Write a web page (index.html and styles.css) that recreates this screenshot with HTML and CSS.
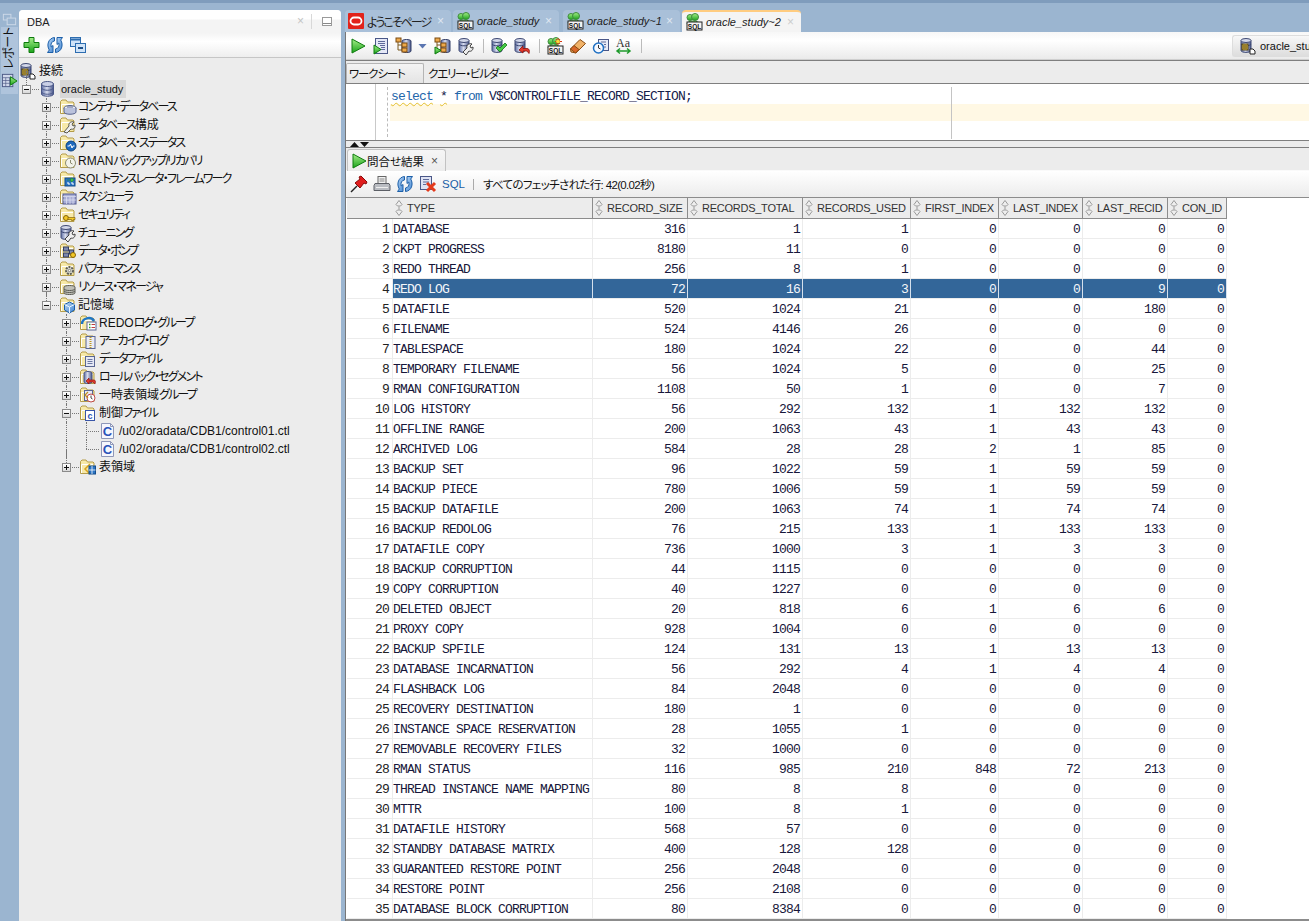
FILE: index.html
```html
<!DOCTYPE html>
<html lang="ja">
<head>
<meta charset="utf-8">
<title>Oracle SQL Developer</title>
<link rel="stylesheet" href="styles.css">
</head>
<body>
<svg class="sprite" aria-hidden="true">
<defs>
<linearGradient id="gDb" x1="0" x2="1" y1="0" y2="0"><stop offset="0" stop-color="#5f6fa5"/><stop offset=".45" stop-color="#d7dcee"/><stop offset="1" stop-color="#46548a"/></linearGradient>
<linearGradient id="gBlue" x1="0" x2="1" y1="0" y2="1"><stop offset="0" stop-color="#bcd9f7"/><stop offset="1" stop-color="#3f84d0"/></linearGradient>
<linearGradient id="gGreen" x1="0" x2="0" y1="0" y2="1"><stop offset="0" stop-color="#a6ee8a"/><stop offset="1" stop-color="#1aa31a"/></linearGradient>
</defs>
<symbol id="fold" viewBox="0 0 18 18"><path d="M1.5 15.5V3.5L3 2h4l1.5 2H14l1 1v10.5z" fill="#f7e9a8" stroke="#b49c4a"/><path d="M2.5 15V6.5h11.5" fill="none" stroke="#fff"/></symbol>
<symbol id="db" viewBox="0 0 18 18"><path d="M2.5 4v10c0 3 12 3 12 0V4z" fill="url(#gDb)" stroke="#4a5787"/><ellipse cx="8.5" cy="4" rx="6" ry="2.5" fill="#c9cfe6" stroke="#4a5787"/><path d="M2.5 8c1 3 11 3 12 0M2.5 12c1 3 11 3 12 0" fill="none" stroke="#4a5787"/></symbol>
<symbol id="dbs" viewBox="0 0 18 18"><path d="M2 3.5v10c0 2.5 10 2.5 10 0v-10z" fill="url(#gDb)" stroke="#3d4872"/><ellipse cx="7" cy="3.5" rx="5" ry="2" fill="#d3d8ea" stroke="#3d4872"/><path d="M2 7c1 2.4 9 2.4 10 0" fill="none" stroke="#3d4872"/></symbol>
<symbol id="conn" viewBox="0 0 18 18"><use href="#dbs"/><rect x="3" y="7" width="6" height="6" fill="#e5c14a" stroke="#4d3e10"/><path d="M4 9h4M4 11h4" stroke="#4d3e10"/><path d="M11 12v5h5v-3l-2-2z" fill="#fff" stroke="#222"/></symbol>
<symbol id="o-cont" viewBox="0 0 18 18"><ellipse cx="11" cy="10" rx="6" ry="2.5" fill="#e9ecf5" stroke="#59658f"/><path d="M5 10v4c0 3 12 3 12 0v-4" fill="#bac2dc" stroke="#59658f"/><path d="M8 9h6" stroke="#59658f"/></symbol>
<symbol id="o-wrench" viewBox="0 0 18 18"><path d="M5 16l5-6c-1-3 2-5 5-4l-2 2 1 2 2-1c.5 3-2 5-4 4l-4 4z" fill="#eee" stroke="#59594f"/></symbol>
<symbol id="o-stat" viewBox="0 0 18 18"><circle cx="12" cy="12" r="5" fill="#1d68bd" stroke="#0e427e"/><path d="M8.500 12h2l1-2 1.500 4 1-2h1.500" fill="none" stroke="#fff"/></symbol>
<symbol id="o-disc" viewBox="0 0 18 18"><circle cx="11.500" cy="11" r="5" fill="#f3f3ea" stroke="#8b8b70"/><path d="M11.500 8v3l2 1" fill="none" stroke="#8b8b70"/></symbol>
<symbol id="o-sqlt" viewBox="0 0 18 18"><rect x="6" y="8" width="10" height="8" fill="#2b74c4" stroke="#134c8b"/><path d="M8 10h4M12 8l3 2-3 2z" fill="#4fd34f" stroke="#1d8d1d" stroke-width=".6"/><path d="M8 13h2v2M12 13h2v2" fill="none" stroke="#fff"/></symbol>
<symbol id="o-cal" viewBox="0 0 18 18"><rect x="4" y="6" width="13" height="10" fill="#a9aed6" stroke="#505990"/><path d="M4 8.500h13M7.500 9v7M11 9v7M14 9v7M4 12h13" stroke="#e1e4f4" stroke-width=".7"/></symbol>
<symbol id="o-key" viewBox="0 0 18 18"><circle cx="7" cy="12" r="2.500" fill="#f3c826" stroke="#85640a"/><path d="M9 11.500h7v2h-1.500v1h-2v-1H9z" fill="#f3c826" stroke="#85640a" stroke-width=".7"/></symbol>
<symbol id="o-pump" viewBox="0 0 18 18"><rect x="4.500" y="5" width="5" height="4" fill="#7c88ad" stroke="#353f63"/><rect x="4.500" y="11" width="5" height="4" fill="#7c88ad" stroke="#353f63"/><rect x="10.500" y="8" width="4" height="4" fill="#7c88ad" stroke="#353f63"/><circle cx="14" cy="13" r="2.500" fill="#f3c826" stroke="#85640a"/></symbol>
<symbol id="o-gear" viewBox="0 0 18 18"><circle cx="10.500" cy="10.500" r="3.500" fill="#d9d9d0" stroke="#5d5d55" stroke-width="2" stroke-dasharray="2 1"/><circle cx="10.500" cy="10.500" r="1.200" fill="#fff" stroke="#5d5d55" stroke-width=".7"/></symbol>
<symbol id="o-stack" viewBox="0 0 18 18"><path d="M5 9c0-2 11-2 11 0v6c0 2-11 2-11 0z" fill="#c0c0b8" stroke="#5b5b55"/><path d="M5 11c1 2 10 2 11 0M5 13c1 2 10 2 11 0" fill="none" stroke="#5b5b55"/></symbol>
<symbol id="o-cube" viewBox="0 0 18 18"><path d="M10.500 6l5 2.500v5.500l-5 3-5-3V8.500z" fill="url(#gBlue)" stroke="#1c5fa8"/><path d="M5.500 8.500l5 2.500 5-2.500M10.500 11v6" fill="none" stroke="#e8f4ff"/></symbol>
<symbol id="o-redo" viewBox="0 0 18 18"><path d="M3 10c0-6 9-8 12-3" fill="none" stroke="#1e76c6" stroke-width="2.500"/><rect x="8" y="8" width="9" height="8" fill="#fff" stroke="#5a6794"/><path d="M10 10.500h1.500M10 13.500h1.500" stroke="#2da12d" stroke-width="1.500"/><path d="M12.500 10.500H16M12.500 13.500H16" stroke="#c04040"/></symbol>
<symbol id="o-zip" viewBox="0 0 18 18"><rect x="7" y="4.500" width="9" height="12" fill="#e9ebf6" stroke="#5a6794"/><path d="M11.500 5v11" stroke="#bf9a1d" stroke-width="2" stroke-dasharray="1 1"/></symbol>
<symbol id="o-doc" viewBox="0 0 18 18"><rect x="6.500" y="6.500" width="9" height="10" fill="#e6e9f6" stroke="#5a6794"/><path d="M8.500 9.500h5M8.500 11.500h5M8.500 13.500h5" stroke="#6c78a4"/></symbol>
<symbol id="o-rb" viewBox="0 0 18 18"><path d="M5 5c0-2 8-2 8 0v9c0 2-8 2-8 0z" fill="url(#gDb)" stroke="#4a5787"/><path d="M7 13l3-3v2h5c1 0 2 1 1 4l-2-2h-4v2z" fill="#e23a2e" stroke="#8f120b" stroke-width=".7"/></symbol>
<symbol id="o-temp" viewBox="0 0 18 18"><rect x="5.500" y="4.500" width="8" height="10" fill="#e9ebf6" stroke="#5a6794"/><circle cx="12" cy="12" r="4" fill="#fff" stroke="#c04a4a"/><path d="M12 9.500V12l1.500 1" fill="none" stroke="#444"/><path d="M9 6l-3 3 3 3" fill="none" stroke="#c28e1a" stroke-width="1.200"/></symbol>
<symbol id="o-c" viewBox="0 0 18 18"><rect x="6.500" y="6.500" width="9" height="10" fill="#fff" stroke="#3a56a8"/></symbol>
<symbol id="o-ts" viewBox="0 0 18 18"><path d="M11 6l-5 5 5 5" fill="none" stroke="#d9a41e" stroke-width="1.500"/><rect x="10" y="8" width="6.500" height="8" fill="#2b74c4" stroke="#134c8b"/><path d="M13 8v8M10 12h6.500" stroke="#fff" stroke-width=".8"/></symbol>
<symbol id="file" viewBox="0 0 18 18"><path d="M2.500 1.500h9l3 3v12h-12z" fill="#f5f6fd" stroke="#8f97b8"/><path d="M11.500 1.500v3h3" fill="none" stroke="#8f97b8"/></symbol>
<symbol id="play" viewBox="0 0 18 18"><path d="M3 2l13 7-13 7z" fill="url(#gGreen)" stroke="#0f7d0f"/></symbol>
<symbol id="run" viewBox="0 0 18 18"><rect x="3.500" y="1.500" width="12" height="15" fill="#e5e8f7" stroke="#4a5787"/><path d="M6 4.500h7M6 6.500h7M8 8.500h5M9 10.500h4M9 12.500h4" stroke="#5f6b9a"/><path d="M2 8l7 4.500L2 17z" fill="url(#gGreen)" stroke="#0f7d0f"/></symbol>
<symbol id="plan" viewBox="0 0 18 18"><path d="M7 4c0-2 9-2 9 0v10c0 2-9 2-9 0z" fill="url(#gDb)" stroke="#333e66"/><path d="M3 4v9h5M3 8h5" fill="none" stroke="#7a5a20"/><rect x="1" y="1" width="5" height="4" fill="#eda94b" stroke="#7a4a10"/><rect x="7" y="6" width="5" height="4" fill="#eda94b" stroke="#7a4a10"/><rect x="7" y="11" width="5" height="4" fill="#eda94b" stroke="#7a4a10"/></symbol>
<symbol id="trace" viewBox="0 0 18 18"><use href="#plan"/><path d="M1 10l6 3.500L1 17z" fill="url(#gGreen)" stroke="#0f7d0f"/></symbol>
<symbol id="dbw" viewBox="0 0 18 18"><use href="#dbs"/><path d="M6 15l4-4c-1-3 2-5 5-4l-2 2 1 2 2-1c.5 3-2 5-4 4l-3 4z" fill="#eee" stroke="#444"/></symbol>
<symbol id="commit" viewBox="0 0 18 18"><use href="#dbs"/><path d="M6 11l2-2 2 2 5-5 2 2-7 7z" fill="#46c846" stroke="#127a12" stroke-width=".8"/></symbol>
<symbol id="rollback" viewBox="0 0 18 18"><use href="#dbs"/><path d="M6 13l4-4v2.500h4c2 0 3 2 2 5l-2-2.500h-4V16z" fill="#e23a2e" stroke="#8f120b" stroke-width=".8"/></symbol>
<symbol id="sql" viewBox="0 0 18 18"><circle cx="5" cy="4.500" r="3" fill="url(#gGreen)" stroke="#3f8a3f"/><circle cx="10" cy="4" r="3.500" fill="url(#gGreen)" stroke="#3f8a3f"/><path d="M2 11c0-4 12-4 13 0z" fill="url(#gGreen)" stroke="#3f8a3f"/><rect x="2" y="9" width="15" height="8" fill="#f4f4f4" stroke="#222"/><text x="9.500" y="15.500" class="badge">SQL</text></symbol>
<symbol id="sqlnew" viewBox="0 0 18 18"><use href="#sql"/><path d="M12 1v7M9 4.500h7M10 2l4 5M14 2l-4 5" stroke="#d93b13" stroke-width="1"/><circle cx="12" cy="4.500" r="1.800" fill="#ffd83a"/></symbol>
<symbol id="eraser" viewBox="0 0 18 18"><path d="M1.500 12L11 2.500l5.500 4-9.500 9.500-5-1z" fill="#f0b268" stroke="#8a4c13"/><path d="M1.500 12l5 4 3.500-3.500-5-4z" fill="#d9682a" stroke="#8a4c13"/></symbol>
<symbol id="hist" viewBox="0 0 18 18"><rect x="6.500" y="2.500" width="10" height="11" fill="#e8ebf7" stroke="#4a5787"/><path d="M9 5h5M12 7.500h2M12 10h2" stroke="#5f6b9a"/><circle cx="6.500" cy="11" r="5" fill="#f5f8ff" stroke="#1e6fc2" stroke-width="1.500"/><path d="M6.500 8v3l2 1" fill="none" stroke="#333"/></symbol>
<symbol id="case" viewBox="0 0 18 18"><text x="1" y="10" class="aa">Aa</text><path d="M2 14h13M5 11.500L2 14l3 2.500M12 11.500l3 2.500-3 2.500" fill="none" stroke="#1f9a2c" stroke-width="1.500"/></symbol>
<symbol id="add" viewBox="0 0 18 18"><path d="M6 1.500h5v5h5v5h-5v5H6v-5H1v-5h5z" fill="url(#gGreen)" stroke="#0c7a0c"/></symbol>
<symbol id="refresh" viewBox="0 0 18 18"><path d="M8.500 1.500v3.500C5.500 5.300 4.500 8 5.200 11L7 9.500v7H1.500l1.800-2.500C.2 9 2.500 2 8.500 1.500z" fill="url(#gBlue)" stroke="#1c5fa8"/><path d="M9.500 16.500V13c3-.3 4-3 3.300-6L11 8.500v-7h5.500L14.700 4c3.100 5 .8 12-5.200 12.500z" fill="url(#gBlue)" stroke="#1c5fa8"/></symbol>
<symbol id="collapse" viewBox="0 0 18 18"><rect x="1.500" y="1.500" width="10" height="9" fill="#cfe3f8" stroke="#2d6db0"/><path d="M1.500 3.500h10" stroke="#2d6db0" stroke-width="2"/><rect x="6.500" y="7.500" width="10" height="9" fill="#cfe3f8" stroke="#2d6db0"/><path d="M9 12h5" stroke="#1d4f87" stroke-width="2"/></symbol>
<symbol id="pin" viewBox="0 0 18 18"><path d="M1 17l6-6" stroke="#222" stroke-width="1.500"/><path d="M5 8l5-4-1-2 2-1 6 6-1 2-2-1-4 5z" fill="#e01d1d" stroke="#8a0808"/></symbol>
<symbol id="print" viewBox="0 0 18 18"><rect x="5" y="1.500" width="8" height="7" fill="#f1f1f1" stroke="#666"/><path d="M6.500 4h5M6.500 6h5" stroke="#888"/><path d="M2 8.500h14l1 2v5H1v-5z" fill="#b9bcc2" stroke="#5c5f66"/><path d="M3 12.500h12" stroke="#eee"/></symbol>
<symbol id="clear" viewBox="0 0 18 18"><rect x="1.500" y="1.500" width="11" height="13" fill="#dfe3f3" stroke="#4a5787"/><path d="M4 4.500h6M4 7h6M4 9.500h3" stroke="#5f6b9a"/><path d="M8 8l8 8M16 8l-8 8" stroke="#e43a1c" stroke-width="3"/></symbol>
<symbol id="oracle" viewBox="0 0 18 18"><rect width="16" height="16" y="1" rx="1" fill="#e2231a"/><rect x="2.500" y="5.500" width="11" height="7" rx="3.500" fill="none" stroke="#fff" stroke-width="1.800"/></symbol>
<symbol id="report" viewBox="0 0 18 18"><rect x="1.500" y="2.500" width="11" height="13" fill="#cfd7ea" stroke="#4d5a86"/><path d="M1.500 6h11M1.500 9h11M1.500 12h11M5 6v9.500M9 6v9.500" stroke="#4d5a86" stroke-width=".7"/><path d="M10 5l7 4.500-7 4.500z" fill="url(#gGreen)" stroke="#0f7d0f"/></symbol>
<symbol id="windows" viewBox="0 0 18 18"><rect x="2.500" y="3.500" width="8" height="6" fill="none" stroke="#cdd9e8"/><rect x="6.500" y="7.500" width="9" height="7" fill="#9bb5d0" stroke="#cdd9e8"/></symbol>
<symbol id="sort" viewBox="0 0 10 18"><path d="M5 1.500l3 4-1.500 1.500H3.500L2 5.500zM5 16.500l3-4-1.500-1.500H3.500L2 12.500z" fill="#eee" stroke="#9a9a9a"/><path d="M5 7.500v3" stroke="#9a9a9a"/></symbol>
</svg>

<div class="app">
  <div class="strip"></div>
  <div class="main">
    <aside class="rail">
      <svg class="rail-ic" viewBox="0 0 18 18"><use href="#windows"/></svg>
      <div class="rail-block">
        <span class="rail-label">レポート</span>
        <svg class="rail-ic" viewBox="0 0 18 18"><use href="#report"/></svg>
      </div>
    </aside>

    <section class="left">
      <div class="left-title">
        <span class="left-name">DBA</span>
        <span class="left-close">×</span>
        <span class="left-min"></span>
      </div>
      <div class="left-tools">
        <svg class="ib" viewBox="0 0 18 18"><use href="#add"/></svg>
        <svg class="ib" viewBox="0 0 18 18"><use href="#refresh"/></svg>
        <svg class="ib" viewBox="0 0 18 18"><use href="#collapse"/></svg>
      </div>
      <div class="tree">
        <div class="tr"><svg class="ti" viewBox="0 0 18 18"><use href="#conn"/></svg><span class="tt t-root">接続</span></div>
        <div class="tr"><span class="c end"><i class="minus"></i></span><svg class="ti" viewBox="0 0 18 18"><use href="#db"/></svg><span class="tt sel">oracle_study</span></div>
        <div class="tr"><span class="c"></span><span class="c v"><i class="plus"></i></span><svg class="ti" viewBox="0 0 18 18"><use href="#fold"/><use href="#o-cont"/></svg><span class="tt">コンテナ・データベース</span></div>
        <div class="tr"><span class="c"></span><span class="c v"><i class="plus"></i></span><svg class="ti" viewBox="0 0 18 18"><use href="#fold"/><use href="#o-wrench"/></svg><span class="tt">データベース<span class="n">構成</span></span></div>
        <div class="tr"><span class="c"></span><span class="c v"><i class="plus"></i></span><svg class="ti" viewBox="0 0 18 18"><use href="#fold"/><use href="#o-stat"/></svg><span class="tt">データベース・ステータス</span></div>
        <div class="tr"><span class="c"></span><span class="c v"><i class="plus"></i></span><svg class="ti" viewBox="0 0 18 18"><use href="#fold"/><use href="#o-disc"/></svg><span class="tt"><span class="n">RMAN</span>バックアップ/リカバリ</span></div>
        <div class="tr"><span class="c"></span><span class="c v"><i class="plus"></i></span><svg class="ti" viewBox="0 0 18 18"><use href="#fold"/><use href="#o-sqlt"/></svg><span class="tt"><span class="n">SQL</span>トランスレータ・フレームワーク</span></div>
        <div class="tr"><span class="c"></span><span class="c v"><i class="plus"></i></span><svg class="ti" viewBox="0 0 18 18"><use href="#fold"/><use href="#o-cal"/></svg><span class="tt">スケジューラ</span></div>
        <div class="tr"><span class="c"></span><span class="c v"><i class="plus"></i></span><svg class="ti" viewBox="0 0 18 18"><use href="#fold"/><use href="#o-key"/></svg><span class="tt">セキュリティ</span></div>
        <div class="tr"><span class="c"></span><span class="c v"><i class="plus"></i></span><svg class="ti" viewBox="0 0 18 18"><use href="#dbw"/></svg><span class="tt">チューニング</span></div>
        <div class="tr"><span class="c"></span><span class="c v"><i class="plus"></i></span><svg class="ti" viewBox="0 0 18 18"><use href="#fold"/><use href="#o-pump"/></svg><span class="tt">データ・ポンプ</span></div>
        <div class="tr"><span class="c"></span><span class="c v"><i class="plus"></i></span><svg class="ti" viewBox="0 0 18 18"><use href="#fold"/><use href="#o-gear"/></svg><span class="tt">パフォーマンス</span></div>
        <div class="tr"><span class="c"></span><span class="c v"><i class="plus"></i></span><svg class="ti" viewBox="0 0 18 18"><use href="#fold"/><use href="#o-stack"/></svg><span class="tt">リソース・マネージャ</span></div>
        <div class="tr"><span class="c"></span><span class="c end"><i class="minus"></i></span><svg class="ti" viewBox="0 0 18 18"><use href="#fold"/><use href="#o-cube"/></svg><span class="tt"><span class="n">記憶域</span></span></div>
        <div class="tr"><span class="c"></span><span class="c"></span><span class="c v"><i class="plus"></i></span><svg class="ti" viewBox="0 0 18 18"><use href="#fold"/><use href="#o-redo"/></svg><span class="tt lv2"><span class="n">REDO</span>ログ・グループ</span></div>
        <div class="tr"><span class="c"></span><span class="c"></span><span class="c v"><i class="plus"></i></span><svg class="ti" viewBox="0 0 18 18"><use href="#fold"/><use href="#o-zip"/></svg><span class="tt lv2">アーカイブ・ログ</span></div>
        <div class="tr"><span class="c"></span><span class="c"></span><span class="c v"><i class="plus"></i></span><svg class="ti" viewBox="0 0 18 18"><use href="#fold"/><use href="#o-doc"/></svg><span class="tt lv2">データファイル</span></div>
        <div class="tr"><span class="c"></span><span class="c"></span><span class="c v"><i class="plus"></i></span><svg class="ti" viewBox="0 0 18 18"><use href="#fold"/><use href="#o-rb"/></svg><span class="tt lv2">ロールバック・セグメント</span></div>
        <div class="tr"><span class="c"></span><span class="c"></span><span class="c v"><i class="plus"></i></span><svg class="ti" viewBox="0 0 18 18"><use href="#fold"/><use href="#o-temp"/></svg><span class="tt lv2"><span class="n">一時表領域</span>グループ</span></div>
        <div class="tr"><span class="c"></span><span class="c"></span><span class="c v"><i class="minus"></i></span><svg class="ti" viewBox="0 0 18 18"><use href="#fold"/><use href="#o-c"/><text x="11" y="15" class="cmark">c</text></svg><span class="tt lv2"><span class="n">制御</span>ファイル</span></div>
        <div class="tr"><span class="c"></span><span class="c"></span><span class="c b"></span><span class="c t"></span><svg class="ti file" viewBox="0 0 18 18"><use href="#file"/><text x="8.500" y="14" class="cbig">C</text></svg><span class="tt file-t">/u02/oradata/CDB1/control01.ctl</span></div>
        <div class="tr"><span class="c"></span><span class="c"></span><span class="c b"></span><span class="c l"></span><svg class="ti file" viewBox="0 0 18 18"><use href="#file"/><text x="8.500" y="14" class="cbig">C</text></svg><span class="tt file-t">/u02/oradata/CDB1/control02.ctl</span></div>
        <div class="tr"><span class="c"></span><span class="c"></span><span class="c end"><i class="plus"></i></span><svg class="ti" viewBox="0 0 18 18"><use href="#fold"/><use href="#o-ts"/></svg><span class="tt lv2"><span class="n">表領域</span></span></div>
      </div>
    </section>

    <section class="right">
      <nav class="tabs">
        <div class="tab tab-a"><svg class="ib" viewBox="0 0 18 18"><use href="#oracle"/></svg><span class="tab-l plain">ようこそページ</span><span class="tab-x">×</span></div>
        <div class="tab tab-b"><svg class="ib" viewBox="0 0 18 18"><use href="#sql"/></svg><span class="tab-l">oracle_study</span><span class="tab-x">×</span></div>
        <div class="tab tab-c"><svg class="ib" viewBox="0 0 18 18"><use href="#sql"/></svg><span class="tab-l">oracle_study~1</span><span class="tab-x">×</span></div>
        <div class="tab tab-d on"><svg class="ib" viewBox="0 0 18 18"><use href="#sql"/></svg><span class="tab-l">oracle_study~2</span><span class="tab-x">×</span></div>
      </nav>
      <div class="content">
        <div class="toolbar">
          <svg class="ib" viewBox="0 0 18 18"><use href="#play"/></svg>
          <svg class="ib" viewBox="0 0 18 18"><use href="#run"/></svg>
          <svg class="ib" viewBox="0 0 18 18"><use href="#plan"/></svg>
          <span class="drop"></span>
          <svg class="ib m2" viewBox="0 0 18 18"><use href="#trace"/></svg>
          <svg class="ib" viewBox="0 0 18 18"><use href="#dbw"/></svg>
          <span class="sep"></span>
          <svg class="ib" viewBox="0 0 18 18"><use href="#commit"/></svg>
          <svg class="ib" viewBox="0 0 18 18"><use href="#rollback"/></svg>
          <span class="sep"></span>
          <svg class="ib" viewBox="0 0 18 18"><use href="#sqlnew"/></svg>
          <svg class="ib" viewBox="0 0 18 18"><use href="#eraser"/></svg>
          <svg class="ib" viewBox="0 0 18 18"><use href="#hist"/></svg>
          <svg class="ib" viewBox="0 0 18 18"><use href="#case"/></svg>
          <span class="sep"></span>
          <div class="conn-btn"><svg class="ib" viewBox="0 0 18 18"><use href="#conn"/></svg><span>oracle_study</span></div>
        </div>
        <div class="ws-tabs">
          <span class="ws-tab on">ワークシート</span>
          <span class="ws-tab">クエリー・ビルダー</span>
        </div>
        <div class="editor">
          <div class="gut1"></div>
          <div class="gut2"></div>
          <div class="code">
            <div class="line"><span class="kw wavy">select</span> <span class="wavy">*</span> <span class="kw">from</span> V$CONTROLFILE_RECORD_SECTION;</div>
            <div class="line cur"></div>
          </div>
          <div class="margin"></div>
        </div>
        <div class="split"><span class="up"></span><span class="down"></span></div>
        <div class="res-tabs">
          <div class="res-tab"><svg class="ib" viewBox="0 0 18 18"><use href="#play"/></svg><span class="res-name">問合せ結果</span><span class="res-x">×</span></div>
        </div>
        <div class="res-tools">
          <svg class="ib" viewBox="0 0 18 18"><use href="#pin"/></svg>
          <svg class="ib" viewBox="0 0 18 18"><use href="#print"/></svg>
          <svg class="ib" viewBox="0 0 18 18"><use href="#refresh"/></svg>
          <svg class="ib" viewBox="0 0 18 18"><use href="#clear"/></svg>
          <span class="sql-link">SQL</span>
          <span class="res-sep"></span>
          <span class="res-msg">すべてのフェッチされた行: 42(0.02秒)</span>
        </div>
        <div class="grid-wrap">
          <table class="grid">
            <colgroup><col class="w0"><col class="w1"><col class="w2"><col class="w3"><col class="w4"><col class="w5"><col class="w6"><col class="w7"><col class="w8"></colgroup>
            <thead><tr><th></th>
              <th><svg class="sort" viewBox="0 0 10 18"><use href="#sort"/></svg>TYPE</th>
              <th><svg class="sort" viewBox="0 0 10 18"><use href="#sort"/></svg>RECORD_SIZE</th>
              <th><svg class="sort" viewBox="0 0 10 18"><use href="#sort"/></svg>RECORDS_TOTAL</th>
              <th><svg class="sort" viewBox="0 0 10 18"><use href="#sort"/></svg>RECORDS_USED</th>
              <th><svg class="sort" viewBox="0 0 10 18"><use href="#sort"/></svg>FIRST_INDEX</th>
              <th><svg class="sort" viewBox="0 0 10 18"><use href="#sort"/></svg>LAST_INDEX</th>
              <th><svg class="sort" viewBox="0 0 10 18"><use href="#sort"/></svg>LAST_RECID</th>
              <th><svg class="sort" viewBox="0 0 10 18"><use href="#sort"/></svg>CON_ID</th>
            </tr></thead>
            <tbody>
<tr><td>1</td><td>DATABASE</td><td>316</td><td>1</td><td>1</td><td>0</td><td>0</td><td>0</td><td>0</td></tr>
<tr><td>2</td><td>CKPT PROGRESS</td><td>8180</td><td>11</td><td>0</td><td>0</td><td>0</td><td>0</td><td>0</td></tr>
<tr><td>3</td><td>REDO THREAD</td><td>256</td><td>8</td><td>1</td><td>0</td><td>0</td><td>0</td><td>0</td></tr>
<tr class="picked"><td>4</td><td>REDO LOG</td><td>72</td><td>16</td><td>3</td><td>0</td><td>0</td><td>9</td><td>0</td></tr>
<tr><td>5</td><td>DATAFILE</td><td>520</td><td>1024</td><td>21</td><td>0</td><td>0</td><td>180</td><td>0</td></tr>
<tr><td>6</td><td>FILENAME</td><td>524</td><td>4146</td><td>26</td><td>0</td><td>0</td><td>0</td><td>0</td></tr>
<tr><td>7</td><td>TABLESPACE</td><td>180</td><td>1024</td><td>22</td><td>0</td><td>0</td><td>44</td><td>0</td></tr>
<tr><td>8</td><td>TEMPORARY FILENAME</td><td>56</td><td>1024</td><td>5</td><td>0</td><td>0</td><td>25</td><td>0</td></tr>
<tr><td>9</td><td>RMAN CONFIGURATION</td><td>1108</td><td>50</td><td>1</td><td>0</td><td>0</td><td>7</td><td>0</td></tr>
<tr><td>10</td><td>LOG HISTORY</td><td>56</td><td>292</td><td>132</td><td>1</td><td>132</td><td>132</td><td>0</td></tr>
<tr><td>11</td><td>OFFLINE RANGE</td><td>200</td><td>1063</td><td>43</td><td>1</td><td>43</td><td>43</td><td>0</td></tr>
<tr><td>12</td><td>ARCHIVED LOG</td><td>584</td><td>28</td><td>28</td><td>2</td><td>1</td><td>85</td><td>0</td></tr>
<tr><td>13</td><td>BACKUP SET</td><td>96</td><td>1022</td><td>59</td><td>1</td><td>59</td><td>59</td><td>0</td></tr>
<tr><td>14</td><td>BACKUP PIECE</td><td>780</td><td>1006</td><td>59</td><td>1</td><td>59</td><td>59</td><td>0</td></tr>
<tr><td>15</td><td>BACKUP DATAFILE</td><td>200</td><td>1063</td><td>74</td><td>1</td><td>74</td><td>74</td><td>0</td></tr>
<tr><td>16</td><td>BACKUP REDOLOG</td><td>76</td><td>215</td><td>133</td><td>1</td><td>133</td><td>133</td><td>0</td></tr>
<tr><td>17</td><td>DATAFILE COPY</td><td>736</td><td>1000</td><td>3</td><td>1</td><td>3</td><td>3</td><td>0</td></tr>
<tr><td>18</td><td>BACKUP CORRUPTION</td><td>44</td><td>1115</td><td>0</td><td>0</td><td>0</td><td>0</td><td>0</td></tr>
<tr><td>19</td><td>COPY CORRUPTION</td><td>40</td><td>1227</td><td>0</td><td>0</td><td>0</td><td>0</td><td>0</td></tr>
<tr><td>20</td><td>DELETED OBJECT</td><td>20</td><td>818</td><td>6</td><td>1</td><td>6</td><td>6</td><td>0</td></tr>
<tr><td>21</td><td>PROXY COPY</td><td>928</td><td>1004</td><td>0</td><td>0</td><td>0</td><td>0</td><td>0</td></tr>
<tr><td>22</td><td>BACKUP SPFILE</td><td>124</td><td>131</td><td>13</td><td>1</td><td>13</td><td>13</td><td>0</td></tr>
<tr><td>23</td><td>DATABASE INCARNATION</td><td>56</td><td>292</td><td>4</td><td>1</td><td>4</td><td>4</td><td>0</td></tr>
<tr><td>24</td><td>FLASHBACK LOG</td><td>84</td><td>2048</td><td>0</td><td>0</td><td>0</td><td>0</td><td>0</td></tr>
<tr><td>25</td><td>RECOVERY DESTINATION</td><td>180</td><td>1</td><td>0</td><td>0</td><td>0</td><td>0</td><td>0</td></tr>
<tr><td>26</td><td>INSTANCE SPACE RESERVATION</td><td>28</td><td>1055</td><td>1</td><td>0</td><td>0</td><td>0</td><td>0</td></tr>
<tr><td>27</td><td>REMOVABLE RECOVERY FILES</td><td>32</td><td>1000</td><td>0</td><td>0</td><td>0</td><td>0</td><td>0</td></tr>
<tr><td>28</td><td>RMAN STATUS</td><td>116</td><td>985</td><td>210</td><td>848</td><td>72</td><td>213</td><td>0</td></tr>
<tr><td>29</td><td>THREAD INSTANCE NAME MAPPING</td><td>80</td><td>8</td><td>8</td><td>0</td><td>0</td><td>0</td><td>0</td></tr>
<tr><td>30</td><td>MTTR</td><td>100</td><td>8</td><td>1</td><td>0</td><td>0</td><td>0</td><td>0</td></tr>
<tr><td>31</td><td>DATAFILE HISTORY</td><td>568</td><td>57</td><td>0</td><td>0</td><td>0</td><td>0</td><td>0</td></tr>
<tr><td>32</td><td>STANDBY DATABASE MATRIX</td><td>400</td><td>128</td><td>128</td><td>0</td><td>0</td><td>0</td><td>0</td></tr>
<tr><td>33</td><td>GUARANTEED RESTORE POINT</td><td>256</td><td>2048</td><td>0</td><td>0</td><td>0</td><td>0</td><td>0</td></tr>
<tr><td>34</td><td>RESTORE POINT</td><td>256</td><td>2108</td><td>0</td><td>0</td><td>0</td><td>0</td><td>0</td></tr>
<tr><td>35</td><td>DATABASE BLOCK CORRUPTION</td><td>80</td><td>8384</td><td>0</td><td>0</td><td>0</td><td>0</td><td>0</td></tr>
            </tbody>
          </table>
        </div>
      </div>
    </section>
  </div>
</div>
</body>
</html>
```

FILE: styles.css
```css
* { box-sizing: border-box; }
html, body { margin: 0; padding: 0; height: 100%; }
body {
  overflow: hidden;
  background: #9bb5d0;
  color: #111;
  font: 12px "Liberation Sans", "Noto Sans CJK JP", sans-serif;
  font-feature-settings: "palt" 1;
}
.sprite { display: block; width: 0; height: 0; }
.badge { font: bold 6.5px "Liberation Sans", sans-serif; text-anchor: middle; fill: #111; }
.aa { font: 12px "Liberation Serif", serif; fill: #333; }
.cbig { font: bold 13px "Liberation Sans", sans-serif; text-anchor: middle; fill: #2a52b8; }
.cmark { font: bold 9px "Liberation Sans", sans-serif; text-anchor: middle; fill: #2a52b8; }

.app { display: flex; flex-direction: column; width: 1309px; height: 921px; overflow: hidden; }
.strip { height: 3px; flex: none; background: #7f9cbc; }
.main { flex: 1; min-height: 0; display: flex; padding-top: 7px; }
.ib { width: 18px; height: 18px; flex: none; display: block; }

/* rail */
.rail { width: 19px; flex: none; display: flex; flex-direction: column; align-items: center; padding-top: 1px; }
.rail-ic { width: 17px; height: 17px; display: block; flex: none; }
.rail-block { margin-top: -1px; width: 17px; height: 67px; background: #afc4dc; display: flex; flex-direction: column; align-items: center; padding-top: 2px; gap: 3px; }
.rail-label { display: block; flex: none; writing-mode: vertical-rl; text-orientation: sideways; transform: rotate(180deg); font-size: 12px; line-height: 15px; width: 15px; height: 40px; white-space: nowrap; letter-spacing: -.4px; text-align: left; }

/* left panel */
.left { width: 322px; flex: none; background: #ececec; border-radius: 4px 4px 0 0; overflow: hidden; display: flex; flex-direction: column; }
.left-title { height: 23px; flex: none; background: linear-gradient(#fff 0, #fff 9px, #f4f4f4 10px, #f4f4f4); display: flex; align-items: center; padding: 0 8px 0 8px; font-size: 11px; }
.left-name { flex: 1; color: #222; padding-top: 1px; }
.left-close { color: #c4c4c4; font-size: 12px; width: 15px; padding-right: 3px; border-right: 1px solid #d8d8d8; height: 15px; line-height: 15px; }
.left-min { width: 10px; height: 9px; margin-left: 10px; margin-right: 1px; border: 1px solid #9a9a9a; background: linear-gradient(#fff 5px, #888 5px, #888 6px, #fff 6px); }
.left-tools { height: 25px; flex: none; display: flex; align-items: center; gap: 5px; padding-left: 4px; background: linear-gradient(#f4f4f4, #fff 35%, #eee); border-bottom: 1px solid #c6c6c6; }
.tree { padding-top: 4px; flex: 1; }
.tr { height: 18px; display: flex; align-items: center; font-size: 12px; white-space: nowrap; }
.c { width: 20px; height: 18px; flex: none; position: relative; display: block; }
.c.v::before, .c.t::before, .c.b::before { content: ""; position: absolute; left: 7px; top: 0; bottom: 0; border-left: 1px dotted #777; }
.c.end::before { content: ""; position: absolute; left: 7px; top: -9px; height: 18px; border-left: 1px dotted #777; }
.c.v::after, .c.end::after, .c.t::after, .c.l::after { content: ""; position: absolute; left: 7px; right: 0; top: 9px; border-top: 1px dotted #777; }
.c.l::before { content: ""; position: absolute; left: 7px; top: 0; height: 9px; border-left: 1px dotted #777; }
.plus, .minus { position: absolute; z-index: 1; left: 3px; top: 5px; width: 9px; height: 9px; border: 1px solid #8a8a8a; background: linear-gradient(#fff, #d8d8d8); }
.plus::before, .minus::before { content: ""; position: absolute; left: 1px; right: 1px; top: 3px; height: 1px; background: #111; }
.plus::after { content: ""; position: absolute; top: 1px; bottom: 1px; left: 3px; width: 1px; background: #111; }
.ti { width: 18px; height: 18px; flex: none; display: block; }
.tt { margin-left: 0; padding: 0 2px 0 1px; line-height: 18px; color: #111; letter-spacing: -1.85px; }
.tt.lv2 { margin-left: 1px; }
.n { letter-spacing: 0; }
.t-root { margin-left: 1px; font-size: 12px; letter-spacing: 0; }
.sel { background: #d8d8d8; margin-left: 3px; letter-spacing: 0; font-size: 11px; padding: 0 3px 0 1px; }
.file-t { margin-left: 1px; letter-spacing: 0; }

/* right side */
.right { flex: 1; min-width: 0; display: flex; flex-direction: column; margin-left: 4px; }
.tabs { height: 22px; flex: none; display: flex; align-items: stretch; }
.tab { background: #a9c0d9; border-radius: 4px 4px 0 0; display: flex; align-items: center; padding-left: 3px; color: #111; white-space: nowrap; }
.tab-a { width: 106px; margin-right: 2px; }
.tab-b { width: 106px; margin-right: 4px; }
.tab-c { width: 117px; margin-right: 2px; }
.tab-d { width: 119px; }
.tab.on { background: #f4f4f4; border-top: 2px solid #ffcc80; }
.tab-l { flex: 1; font-style: italic; font-size: 11px; padding-left: 3px; color: #222; }
.tab-l.plain { font-style: normal; font-size: 12px; letter-spacing: -2px; padding-left: 1px; }
.tab-x { width: 14px; color: #dfe7f1; font-size: 12px; }
.tab.on .tab-x { color: #ccc; }

.content { flex: 1; min-height: 0; display: flex; flex-direction: column; background: #fff; border-left: 1px solid #777; }
.toolbar { height: 29px; flex: none; display: flex; align-items: center; gap: 5px; padding-left: 3px; background: linear-gradient(#f7f7f7, #fff 30%, #e9e9e9); border-bottom: 1px solid #7f7f7f; box-shadow: inset 0 -1px 0 #cfcfcf; }
.drop { width: 9px; height: 5px; flex: none; background: #5b76b1; clip-path: polygon(0 0, 100% 0, 50% 100%); }
.m2 { margin-left: 2px; }
.sep { width: 1px; height: 14px; flex: none; background: #bbb; margin: 0 1px 0 3px; }
.conn-btn { margin-left: auto; width: 77px; height: 22px; flex: none; display: flex; align-items: center; gap: 3px; padding-left: 6px; border: 1px solid #ddd; border-right: none; border-radius: 3px 0 0 3px; background: linear-gradient(#f8f8f8, #ddd); overflow: hidden; white-space: nowrap; font-size: 11px; }

.ws-tabs { height: 23px; flex: none; display: flex; background: #ececec; border-bottom: 1px solid #7f7f7f; padding-top: 2px; font-size: 11.5px; }
.ws-tab { display: block; padding: 1px 4px 0; line-height: 20px; letter-spacing: -1.2px; white-space: nowrap; }
.ws-tab.on { background: linear-gradient(#f4f4f4, #e4e4e4); border: 1px solid #b5b5b5; border-bottom: none; border-radius: 2px 2px 0 0; width: 78px; padding: 0 2px; }

.editor { height: 57px; flex: none; display: flex; background: #fff; border-bottom: 1px solid #7f7f7f; position: relative; }
.gut1 { width: 30px; flex: none; border-right: 1px solid #c9c9c9; }
.gut2 { width: 12px; flex: none; border-right: 1px dashed #bbb; margin: 3px 0; }
.code { flex: 1; padding: 3px 0 0 3px; font: 13px/17px "Liberation Mono", monospace; letter-spacing: -.8px; color: #14204a; }
.line { height: 17px; white-space: pre; padding-top: 1px; }
.line.cur { background: #fff8e4; margin-left: -1px; }
.kw { color: #2266aa; }
.wavy { text-decoration: underline wavy #e3bf2d 1px; text-underline-offset: 2px; }
.margin { position: absolute; left: 605px; top: 3px; bottom: 1px; border-left: 1px solid #c4c4c4; }

.split { height: 7px; flex: none; display: flex; gap: 1px; padding: 1px 0 0 4px; background: #ececec; border-bottom: 1px solid #7f7f7f; }
.up, .down { width: 9px; height: 5px; background: #111; }
.up { clip-path: polygon(50% 0, 100% 100%, 0 100%); }
.down { clip-path: polygon(0 0, 100% 0, 50% 100%); }

.res-tabs { height: 23px; flex: none; background: #ececec; border-bottom: 1px solid #fafafa; padding: 1px 0 0 1px; }
.res-tab { width: 99px; height: 22px; display: flex; align-items: center; padding-left: 2px; gap: 1px; border: 1px solid #c2c2c2; border-bottom: none; border-radius: 3px 3px 0 0; background: linear-gradient(#f6f6f6, #ececec); font-size: 11.5px; white-space: nowrap; }
.res-name { margin-left: -2px; }
.res-x { margin-left: 6px; color: #555; font-size: 12px; }
.res-tools { height: 27px; flex: none; display: flex; align-items: center; gap: 5px; padding-left: 4px; background: linear-gradient(#fff, #ececec); border-bottom: 1px solid #8c8c8c; font-size: 11.5px; }
.sql-link { color: #1b5fa6; font-size: 11.5px; margin-left: 0; }
.res-sep { width: 1px; height: 11px; background: #aaa; margin: 0 4px 0 3px; }
.res-msg { letter-spacing: -.65px; white-space: nowrap; }

/* result table */
.grid-wrap { flex: 1; min-height: 0; overflow: hidden; background: #fff; padding-left: 1px; border-bottom: 2px solid #8c8c8c; }
.grid { border-collapse: separate; border-spacing: 0; table-layout: fixed; width: 880px; }
.w0 { width: 46px; } .w1 { width: 200px; } .w2 { width: 95px; } .w3 { width: 115px; } .w4 { width: 108px; }
.w5 { width: 88px; } .w6 { width: 84px; } .w7 { width: 85px; } .w8 { width: 59px; }
.grid th { height: 21px; padding: 1px 0 0 1px; background: #ececec; border-right: 1px solid #8c8c8c; border-bottom: 1px solid #8c8c8c; text-align: left; font: normal 11px/19px "Liberation Sans", sans-serif; letter-spacing: -.25px; color: #333; white-space: nowrap; overflow: hidden; }
.grid th:first-child { border-right: none; }
.sort { width: 10px; height: 18px; vertical-align: middle; margin-right: 3px; margin-top: -2px; }
.grid td { height: 20px; padding: 2px 2px 0 0; border-right: 1px solid #ececec; border-bottom: 1px solid #ececec; text-align: right; font: 13px/17px "Liberation Mono", monospace; letter-spacing: -.8px; color: #17173a; white-space: nowrap; overflow: hidden; }
.grid td:first-child { padding-right: 3px; color: #222; }
.grid td:nth-child(2) { text-align: left; padding-left: 0; padding-right: 0; }
.picked td { color: #f3f6fa; }
.picked td:not(:first-child) { background: #336699; border-right-color: #d5e0ec; }
```
